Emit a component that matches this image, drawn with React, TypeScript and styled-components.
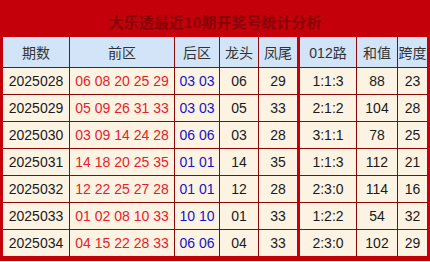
import React from "react";
import styled, { createGlobalStyle } from "styled-components";

const GlobalStyle = createGlobalStyle`
  html, body {
    margin: 0;
    padding: 0;
    background: #ffffff;
  }
  body {
    font-family: "Liberation Sans", "Noto Sans CJK SC", sans-serif;
  }
`;

const RED = "#c4000a";
const LINE = "#8a0a0a";

const Frame = styled.div`
  width: 430px;
  box-sizing: border-box;
  border: 3px solid ${RED};
  background: ${RED};
`;

const Title = styled.div`
  height: 34px;
  display: flex;
  align-items: center;
  justify-content: center;
  font-family: "Noto Sans CJK SC", sans-serif;
  font-size: 15px;
  font-weight: bold;
  color: #8a0008;
  padding-top: 2px;
  box-sizing: border-box;
`;

const Table = styled.table`
  width: 424px;
  border-collapse: separate;
  border-spacing: 0;
  table-layout: fixed;
`;

const Head = styled.th<{ $w: number; $thick?: boolean; $last?: boolean }>`
  width: ${({ $w }) => $w}px;
  height: 30px;
  padding: 0;
  background: #d2e4f7;
  border-bottom: 1px solid ${LINE};
  border-right: ${({ $thick, $last }) => ($last ? "none" : $thick ? `3px solid ${RED}` : `1px solid ${LINE}`)};
  font-family: "Liberation Sans", "Noto Sans CJK SC", sans-serif;
  font-weight: normal;
  font-size: 14px;
  color: #333;
  text-align: center;
  white-space: nowrap;
`;

const Cell = styled.td<{ $tone?: "red" | "blue"; $thick?: boolean; $last?: boolean; $bottom?: boolean }>`
  height: 26px;
  padding: 0;
  background: #fdf3e3;
  border-bottom: ${({ $bottom }) => ($bottom ? "none" : `1px solid ${LINE}`)};
  border-right: ${({ $thick, $last }) => ($last ? "none" : $thick ? `3px solid ${RED}` : `1px solid ${LINE}`)};
  font-size: 14px;
  text-align: center;
  white-space: nowrap;
  color: ${({ $tone }) => ($tone === "red" ? "#e5212b" : $tone === "blue" ? "#1414c8" : "#1a1a1a")};
`;

const BottomEdge = styled.div`
  height: 2px;
`;

const columns = [
  { label: "期数", w: 66 },
  { label: "前区", w: 104 },
  { label: "后区", w: 44 },
  { label: "龙头", w: 38 },
  { label: "凤尾", w: 38, thick: true },
  { label: "012路", w: 56 },
  { label: "和值", w: 40 },
  { label: "跨度", w: 29, last: true },
];

const rows = [
  ["2025028", "06 08 20 25 29", "03 03", "06", "29", "1:1:3", "88", "23"],
  ["2025029", "05 09 26 31 33", "03 03", "05", "33", "2:1:2", "104", "28"],
  ["2025030", "03 09 14 24 28", "06 06", "03", "28", "3:1:1", "78", "25"],
  ["2025031", "14 18 20 25 35", "01 01", "14", "35", "1:1:3", "112", "21"],
  ["2025032", "12 22 25 27 28", "01 01", "12", "28", "2:3:0", "114", "16"],
  ["2025033", "01 02 08 10 33", "10 10", "01", "33", "1:2:2", "54", "32"],
  ["2025034", "04 15 22 28 33", "06 06", "04", "33", "2:3:0", "102", "29"],
];

const App = () => {
  return (
    <>
      <GlobalStyle />
      <Frame>
        <Title>大乐透最近10期开奖号统计分析</Title>
        <Table>
          <thead>
            <tr>
              {columns.map((c) => (
                <Head key={c.label} $w={c.w} $thick={c.thick} $last={c.last}>
                  {c.label}
                </Head>
              ))}
            </tr>
          </thead>
          <tbody>
            {rows.map((r, ri) => (
              <tr key={r[0]}>
                {r.map((v, ci) => (
                  <Cell
                    key={ci}
                    $tone={ci === 1 ? "red" : ci === 2 ? "blue" : undefined}
                    $thick={columns[ci].thick}
                    $last={columns[ci].last}
                    $bottom={ri === rows.length - 1}
                  >
                    {v}
                  </Cell>
                ))}
              </tr>
            ))}
          </tbody>
        </Table>
        <BottomEdge />
      </Frame>
    </>
  );
};

export default App;
